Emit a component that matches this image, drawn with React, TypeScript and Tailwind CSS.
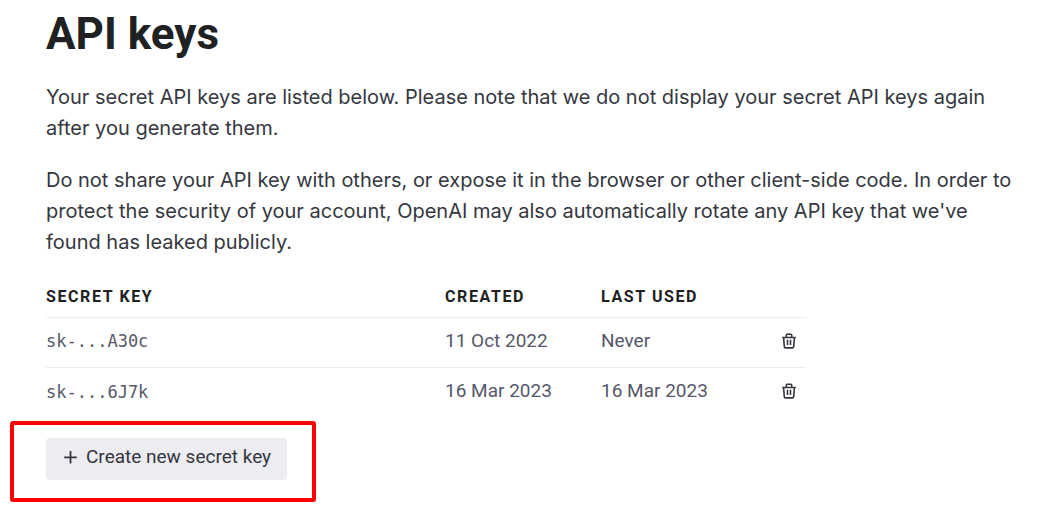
import React from "react";

interface ApiKey {
  secret: string;
  created: string;
  lastUsed: string;
}

const keys: ApiKey[] = [
  { secret: "sk-...A30c", created: "11 Oct 2022", lastUsed: "Never" },
  { secret: "sk-...6J7k", created: "16 Mar 2023", lastUsed: "16 Mar 2023" },
];

function TrashIcon() {
  return (
    <svg className="size-4" viewBox="0 0 16 16" fill="none" stroke="currentColor" strokeWidth="1.6" aria-hidden="true">
      <path d="M1.200 4.500h13.600M5.300 4.500V2c0-.5.3-.8.8-.8h3.800c.5 0 .8.3.8.8v2.500" />
      <path d="M2.600 4.500l.7 9.200c.1.800.5 1.200 1.300 1.200h6.800c.8 0 1.200-.4 1.300-1.200l.7-9.200" />
      <path d="M6.500 6.800v5.200M9.500 6.800v5.200" />
    </svg>
  );
}

function PlusIcon() {
  return (
    <svg className="size-4" viewBox="0 0 16 16" fill="none" stroke="currentColor" strokeWidth="1.8" aria-hidden="true">
      <path d="M8.500 2v12.500M2.200 8.300h12.600" />
    </svg>
  );
}

export default function App() {
  return (
    <main className="bg-white px-[10px] pt-2 font-['Roboto',sans-serif] text-[#353740]">
      <div className="pr-6 pl-9">
        <h1 className="mb-[22px] text-[44px] leading-[52px] font-bold text-[#202123]">API keys</h1>
        <p className="mb-[21px] font-['Inter',sans-serif] text-xl leading-[31px]">
          Your secret API keys are listed below. Please note that we do not display your secret API keys again after you
          generate them.
        </p>
        <p className="mb-5 font-['Inter',sans-serif] text-xl leading-[31px]">
          Do not share your API key with others, or expose it in the browser or other client-side code. In order to
          protect the security of your account, OpenAI may also automatically rotate any API key that we've found has
          leaked publicly.
        </p>
        <table className="w-full max-w-[760px] table-fixed border-collapse text-left">
          <thead>
            <tr className="h-[39px] border-b border-[#ececf1] text-base tracking-widest text-[#202123] uppercase">
              <th className="w-[399px] p-0 font-bold">Secret key</th>
              <th className="w-[156px] p-0 font-bold">Created</th>
              <th className="p-0 font-bold">Last used</th>
              <td className="w-[34px] p-0" />
            </tr>
          </thead>
          <tbody className="text-[19px] text-[#565869]">
            {keys.map((key) => (
              <tr key={key.secret} className="h-[50px] border-b border-[#ececf1] last:border-b-0">
                <td className="p-0 font-['DejaVu_Sans_Mono',monospace] text-[17px]">{key.secret}</td>
                <td className="p-0 pb-0.5">{key.created}</td>
                <td className="p-0 pb-0.5">{key.lastUsed}</td>
                <td className="p-0 pb-0.5">
                  <button type="button" aria-label="Delete key" className="mx-auto flex text-[#353740]">
                    <TrashIcon />
                  </button>
                </td>
              </tr>
            ))}
          </tbody>
        </table>
      </div>
      <div className="mt-1 w-fit rounded-[3px] border-4 border-[#ff0000] pt-[13px] pr-[25px] pb-[18px] pl-8">
        <button
          type="button"
          className="flex items-center gap-2 rounded bg-[#ececf1] px-4 pt-1 pb-2 text-[19px] leading-[30px]"
        >
          <PlusIcon />
          Create new secret key
        </button>
      </div>
    </main>
  );
}
